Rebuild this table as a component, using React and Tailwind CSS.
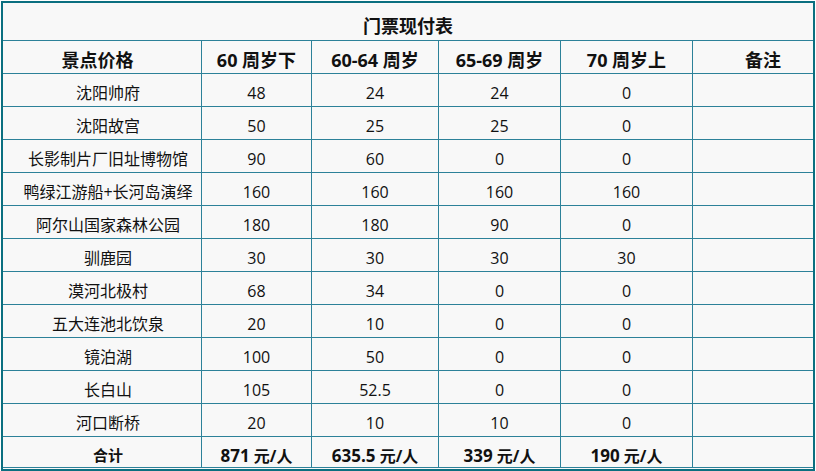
import React from 'react';

const rows = [
  ['沈阳帅府', '48', '24', '24', '0'],
  ['沈阳故宫', '50', '25', '25', '0'],
  ['长影制片厂旧址博物馆', '90', '60', '0', '0'],
  ['鸭绿江游船+长河岛演绎', '160', '160', '160', '160'],
  ['阿尔山国家森林公园', '180', '180', '90', '0'],
  ['驯鹿园', '30', '30', '30', '30'],
  ['漠河北极村', '68', '34', '0', '0'],
  ['五大连池北饮泉', '20', '10', '0', '0'],
  ['镜泊湖', '100', '50', '0', '0'],
  ['长白山', '105', '52.5', '0', '0'],
  ['河口断桥', '20', '10', '10', '0'],
];

const headers = ['景点价格', '60 周岁下', '60-64 周岁', '65-69 周岁', '70 周岁上', '备注'];
const totals = ['871', '635.5', '339', '190'];

const line = 'border-[#2c8199]';

export default function App() {
  return (
    <div className="w-[816px] h-[471px] bg-white pt-px pl-px" style={{ fontFamily: '"Open Sans", "Noto Sans CJK SC", sans-serif' }}>
      <div className="w-[814px] h-[470px] border-2 border-[#0b6f80] bg-[#f8f8f8] text-[#111]">
        <div className="grid grid-cols-[199px_110px_127px_122px_132px_120px]">
          <div className={`col-span-6 h-[38px] border-b ${line} flex items-center justify-center pt-[9px] text-[18px] font-bold leading-none`}>
            门票现付表
          </div>

          {headers.map((h, i) => (
            <div
              key={h}
              className={`h-[33px] border-b ${i < 5 ? 'border-r' : ''} ${line} flex items-center justify-center pt-[6px] text-[18px] font-bold leading-none ${i === 0 ? 'pr-[9px]' : ''} ${i === 5 ? 'pl-5' : ''}`}
            >
              {h}
            </div>
          ))}

          {rows.map((r) => (
            <React.Fragment key={r[0]}>
              {[...r, ''].map((c, i) => (
                <div
                  key={i}
                  className={`h-[33px] border-b ${i < 5 ? 'border-r' : ''} ${line} flex items-center justify-center pt-[6px] text-[16px] leading-none ${i === 0 ? 'pl-3' : ''}`}
                >
                  {c}
                </div>
              ))}
            </React.Fragment>
          ))}

          <div className={`h-[31px] border-b border-r ${line} flex items-center justify-center pt-[7px] pl-3 text-[15px] font-bold leading-none`}>
            合计
          </div>
          {totals.map((n) => (
            <div
              key={n}
              className={`h-[31px] border-b border-r ${line} flex items-baseline justify-center pt-[10px] text-[16px] font-bold leading-none`}
            >
              <span className="text-[17px]">{n}</span>&nbsp;元/人
            </div>
          ))}
          <div className={`h-[31px] border-b ${line}`} />
        </div>
      </div>
    </div>
  );
}
